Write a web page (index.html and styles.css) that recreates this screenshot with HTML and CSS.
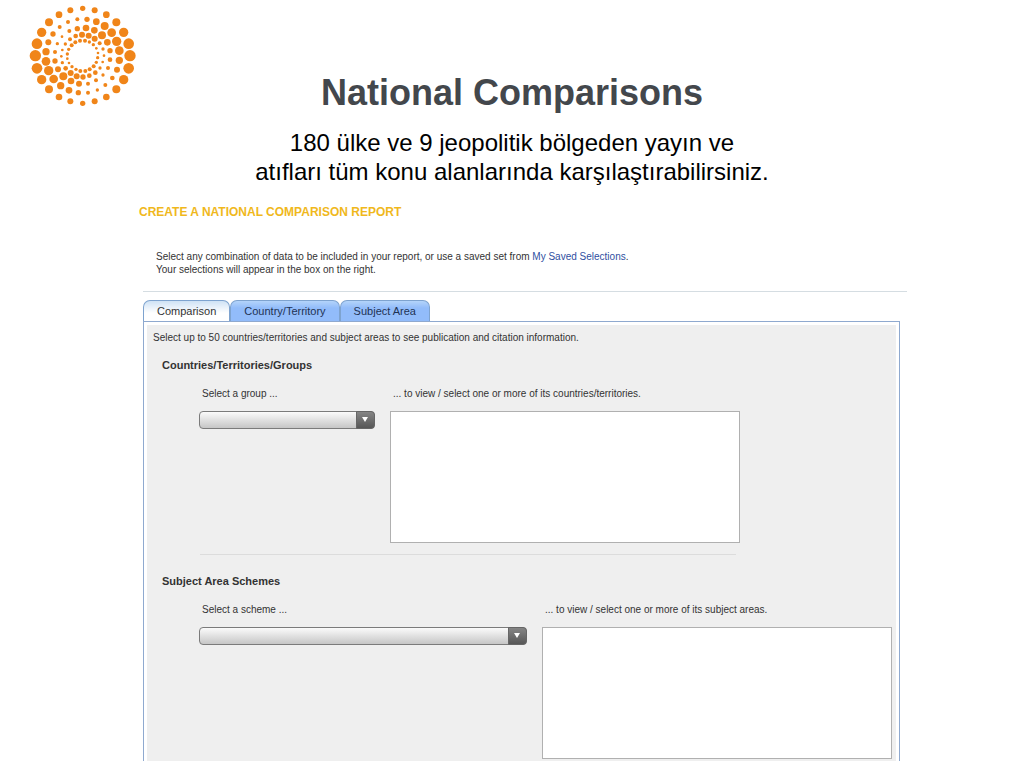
FILE: index.html
```html
<!DOCTYPE html>
<html lang="tr">
<head>
    <meta charset="UTF-8">
    <meta name="viewport" content="width=device-width, initial-scale=1.0">
    <title>National Comparisons</title>
    <link rel="stylesheet" href="styles.css">
</head>
<body>
    <header class="header">
        <svg class="logo" id="logo" viewBox="0 0 390 345" role="img" aria-label="Logo"></svg>
        <div class="heading">
            <h1 class="title">National Comparisons</h1>
            <p class="subtitle">180 ülke ve 9 jeopolitik bölgeden yayın ve<br>atıfları tüm konu alanlarında karşılaştırabilirsiniz.</p>
        </div>
    </header>

    <main class="report">
        <h2 class="report-title">CREATE A NATIONAL COMPARISON REPORT</h2>
        <p class="intro">Select any combination of data to be included in your report, or use a saved set from <a href="#">My Saved Selections</a>.<br>Your selections will appear in the box on the right.</p>

        <div class="tabs">
            <button class="tab active" type="button">Comparison</button>
            <button class="tab" type="button">Country/Territory</button>
            <button class="tab" type="button">Subject Area</button>
        </div>

        <form class="panel">
            <div class="panel-body">
                <p class="hint">Select up to 50 countries/territories and subject areas to see publication and citation information.</p>

                <section class="group">
                    <h3 class="group-title">Countries/Territories/Groups</h3>
                    <div class="fields">
                        <div class="field field-group">
                            <label for="group">Select a group ...</label>
                            <div class="dropdown"><select id="group"></select></div>
                        </div>
                        <div class="field field-list">
                            <label for="countries">... to view / select one or more of its countries/territories.</label>
                            <select class="list" id="countries" multiple></select>
                        </div>
                    </div>
                </section>

                <hr class="separator">

                <section class="group">
                    <h3 class="group-title">Subject Area Schemes</h3>
                    <div class="fields">
                        <div class="field field-scheme">
                            <label for="scheme">Select a scheme ...</label>
                            <div class="dropdown"><select id="scheme"></select></div>
                        </div>
                        <div class="field field-list">
                            <label for="subjects">... to view / select one or more of its subject areas.</label>
                            <select class="list" id="subjects" multiple></select>
                        </div>
                    </div>
                </section>
            </div>
        </form>
    </main>

    <script src="logo.js"></script>
</body>
</html>
```
FILE: styles.css
```css
*,
*::before,
*::after {
    margin: 0;
    padding: 0;
    box-sizing: border-box;
}

body {
    font-family: "Liberation Sans", Arial, sans-serif;
    font-size: 10px;
    line-height: 13px;
    color: #333;
    background-color: #fff;
}

.header {
    display: grid;
    grid-template-columns: 130px 1fr 130px;
    padding: 0 20px;
}

.logo {
    width: 130px;
    height: 115px;
    fill: #f08519;
}

.heading {
    padding-top: 72px;
    text-align: center;
}

.title {
    font-size: 36px;
    line-height: 42px;
    color: #43474c;
    margin-bottom: 14px;
}

.subtitle {
    font-size: 24px;
    line-height: 29px;
    color: #000;
}

.report {
    margin: 18px 117px 0 139px;
}

.report-title {
    font-size: 12px;
    line-height: 16px;
    color: #f0b81c;
}

.intro {
    margin: 0 0 8px 4px;
    padding: 30px 0 15px 13px;
    border-bottom: 1px solid #d5dde2;
}

.intro a {
    color: #2f4f9f;
    text-decoration: none;
}

.tabs {
    display: flex;
    margin-left: 4px;
}

.tab {
    height: 21px;
    padding: 0 13px;
    font: inherit;
    font-size: 11px;
    color: #1f3354;
    background: linear-gradient(#b4d4fa, #92bcfa 35%);
    border: 1px solid #7ea3cf;
    border-bottom: none;
    border-radius: 7px 7px 0 0;
}

.tab.active {
    color: #333;
    background: linear-gradient(#cfe2f5, #fff 60%);
}

.panel {
    margin: 0 7px 0 4px;
    padding: 3px 3px 0;
    border: 1px solid #8fa9cf;
    border-bottom: none;
}

.panel-body {
    padding: 6px 4px 2px 6px;
    background-color: #efefef;
}

.group {
    padding: 15px 0 0 9px;
}

.group-title {
    font-size: 11px;
    margin-bottom: 15px;
}

.fields {
    display: flex;
    gap: 15px;
    padding-left: 37px;
}

.field label {
    display: block;
    margin-bottom: 11px;
    padding-left: 3px;
}

.field-group {
    width: 176px;
}

.field-scheme {
    width: 328px;
}

.field-list {
    width: 350px;
}

.dropdown {
    position: relative;
}

.dropdown select {
    appearance: none;
    display: block;
    width: 100%;
    height: 18px;
    background: linear-gradient(#fbfbfb, #c6c6c6);
    border: 1px solid #7b7b7b;
    border-radius: 4px;
}

.dropdown::before {
    content: "";
    position: absolute;
    top: 0;
    right: 0;
    width: 19px;
    height: 18px;
    background: linear-gradient(#858585, #575757);
    border: 1px solid #666;
    border-radius: 0 4px 4px 0;
    pointer-events: none;
}

.dropdown::after {
    content: "";
    position: absolute;
    top: 6px;
    right: 7px;
    border: 3px solid transparent;
    border-top: 5px solid #fff;
    border-bottom: none;
    pointer-events: none;
}

.list {
    appearance: none;
    display: block;
    width: 100%;
    height: 132px;
    background-color: #fff;
    border: 1px solid #b0b0b0;
    border-radius: 0;
}

.separator {
    width: 536px;
    margin: 11px 0 5px 47px;
    border: none;
    border-top: 1px solid #dcdcdc;
}
```
FILE: logo.js
```js
// Dots of the logo, ring by ring from the outside: x, y, radius
const rings = [
    [[188,25,8],[224,31,9],[259,44,10],[289,67,12],[311,97,14],[326,131,16],[330,167,17],[326,205,16],[311,239,14],[289,268,12],[259,291,10],[224,304,9],[188,310,8],[151,304,9],[117,291,10],[87,268,12],[65,239,14],[51,205,16],[46,167,17],[51,131,16],[65,97,14],[87,67,12],[117,44,10],[151,31,9]],
    [[201,58,8],[229,65,10],[254,78,12],[275,98,13],[290,124,14],[298,152,13],[298,181,11],[291,209,9],[277,234,7],[256,255,6],[232,270,5],[204,278,6],[175,278,8],[147,271,10],[122,257,11],[101,237,13],[86,212,14],[78,184,13],[78,155,11],[85,127,9],[99,102,8],[119,81,6],[144,66,6],[172,58,6]],
    [[198,84,10],[223,91,10],[246,106,12],[262,127,10],[270,152,8],[270,179,7],[264,204,6],[249,225,5],[228,241,6],[204,251,6],[177,251,9],[153,243,10],[130,229,12],[114,208,9],[105,183,8],[105,156,6],[112,131,5],[126,110,4],[148,93,6],[172,86,8]],
    [[186,104,9],[206,107,9],[224,116,9],[239,130,6],[249,147,5],[252,167,4],[248,186,4],[240,204,5],[226,218,7],[208,227,7],[189,231,8],[170,229,9],[152,219,9],[137,205,7],[127,188,5],[124,169,4],[127,150,4],[136,132,5],[150,118,6],[167,108,7]],
    [[180,122,6],[195,122,6],[208,126,5],[220,134,5],[229,145,4],[234,159,4],[233,173,5],[229,187,5],[221,199,6],[209,208,6],[196,213,6],[181,213,6],[168,208,5],[156,200,5],[147,189,4],[142,176,4],[142,162,5],[146,148,5],[155,136,6],[166,127,6]]
];

const logo = document.getElementById('logo');

rings.flat().forEach(([x, y, r]) => {
    const dot = document.createElementNS('http://www.w3.org/2000/svg', 'circle');
    dot.setAttribute('cx', x);
    dot.setAttribute('cy', y);
    dot.setAttribute('r', r);
    logo.appendChild(dot);
});
```
